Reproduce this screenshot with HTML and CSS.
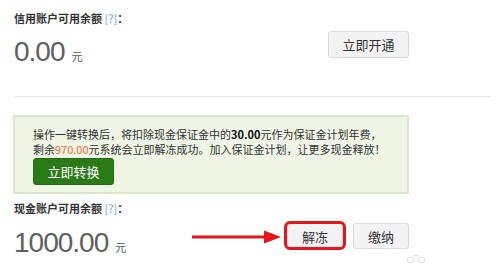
FILE: index.html
```html
<!DOCTYPE html>
<html lang="zh-CN">
<head>
<meta charset="utf-8">
<link rel="stylesheet" href="styles.css">
</head>
<body>
<div class="page">
  <section class="acct">
    <div class="label">信用账户可用余额 <span class="help">[?]</span>：</div>
    <div class="row">
      <div class="amount"><span class="num">0.00</span><span class="unit">元</span></div>
      <button class="btn">立即开通</button>
    </div>
  </section>
  <div class="divider"></div>
  <div class="notice">
    <p>操作一键转换后，将扣除现金保证金中的<b>30.00</b>元作为保证金计划年费，<br>剩余<span class="hl">970.00</span>元系统会立即解冻成功。加入保证金计划，让更多现金释放！</p>
    <button class="btn-green">立即转换</button>
  </div>
  <section class="acct acct2">
    <div class="label">现金账户可用余额 <span class="help">[?]</span>：</div>
    <div class="row row2">
      <div class="amount"><span class="num">1000.00</span><span class="unit">元</span></div>
      <svg class="arrow" width="90" height="14" viewBox="0 0 90 14">
        <line x1="0" y1="7" x2="76" y2="7" stroke="#e8141b" stroke-width="3"/>
        <polygon points="72,0.5 89,7 72,13.5" fill="#e8141b"/>
      </svg>
      <div class="actions">
        <button class="btn small marked">解冻</button>
        <button class="btn small">缴纳</button>
      </div>
    </div>
  </section>
  <svg class="paw" width="22" height="12" viewBox="0 0 22 12">
    <circle cx="5" cy="6" r="3" fill="none" stroke="#e4e4e4" stroke-width="1"/>
    <circle cx="11" cy="4" r="3" fill="none" stroke="#e4e4e4" stroke-width="1"/>
    <circle cx="17" cy="6" r="3" fill="none" stroke="#e4e4e4" stroke-width="1"/>
  </svg>
</div>
</body>
</html>
```

FILE: styles.css
```css
* { box-sizing: border-box; }
html, body { margin: 0; padding: 0; background: #fff; }
body {
  font-family: "Noto Sans CJK SC", "Liberation Sans", sans-serif;
  color: #333;
  width: 499px;
  height: 264px;
  overflow: hidden;
}
.page {
  position: relative;
  padding: 10px 0 0 14px;
  height: 264px;
}
.acct { width: 395px; }
.label {
  font-size: 11px;
  line-height: 16px;
  font-weight: bold;
  color: #333;
}
.help {
  font-weight: normal;
  color: #6a9fd6;
}
.row {
  display: flex;
  justify-content: space-between;
  align-items: flex-start;
}
.amount {
  margin-top: 11px;
  display: flex;
  align-items: baseline;
  color: #606060;
}
.num {
  font-family: "Liberation Sans", Arial, sans-serif;
  font-size: 28px;
  line-height: 30px;
  letter-spacing: -1px;
}
.unit {
  font-size: 11px;
  margin-left: 7px;
  color: #555;
}
.btn {
  margin-top: 5px;
  width: 81px;
  height: 27px;
  padding: 0;
  background: #f3f3f3;
  border: 1px solid #d9d9d9;
  border-radius: 3px;
  font-family: "Noto Sans CJK SC", sans-serif;
  font-size: 13px;
  color: #333;
}
.divider {
  margin-top: 29px;
  width: 477px;
  height: 1px;
  background: #e8e8e8;
}
.notice {
  margin-top: 18px;
  margin-left: -1px;
  width: 396px;
  background: #eef5e4;
  border: 2px solid #dce9c8;
  padding: 10px 18px 7px 18px;
}
.notice p {
  margin: 0;
  font-size: 11px;
  line-height: 15px;
  color: #333;
}
.notice b { color: #111; }
.hl { color: #f26b3a; }
.btn-green {
  margin-top: 1px;
  display: block;
  width: 81px;
  height: 27px;
  padding: 0;
  background: #2a7a17;
  border: 1px solid #246a12;
  border-radius: 3px;
  color: #fff;
  font-family: "Noto Sans CJK SC", sans-serif;
  font-size: 13px;
}
.acct2 { margin-top: 6px; }
.row2 { position: relative; }
.row2 .amount { margin-top: 12px; }
.actions {
  display: flex;
  gap: 10px;
  margin-top: 7px;
}
.btn.small {
  margin-top: 0;
  width: 56px;
  height: 26px;
}
.marked { position: relative; }
.marked::after {
  content: "";
  position: absolute;
  top: -3px;
  left: -4px;
  right: -4px;
  bottom: -2px;
  border: 3px solid #e8141b;
  border-radius: 6px;
}
.arrow {
  position: absolute;
  left: 178px;
  top: 14px;
}
.paw {
  position: absolute;
  left: 405px;
  top: 254px;
}
```
